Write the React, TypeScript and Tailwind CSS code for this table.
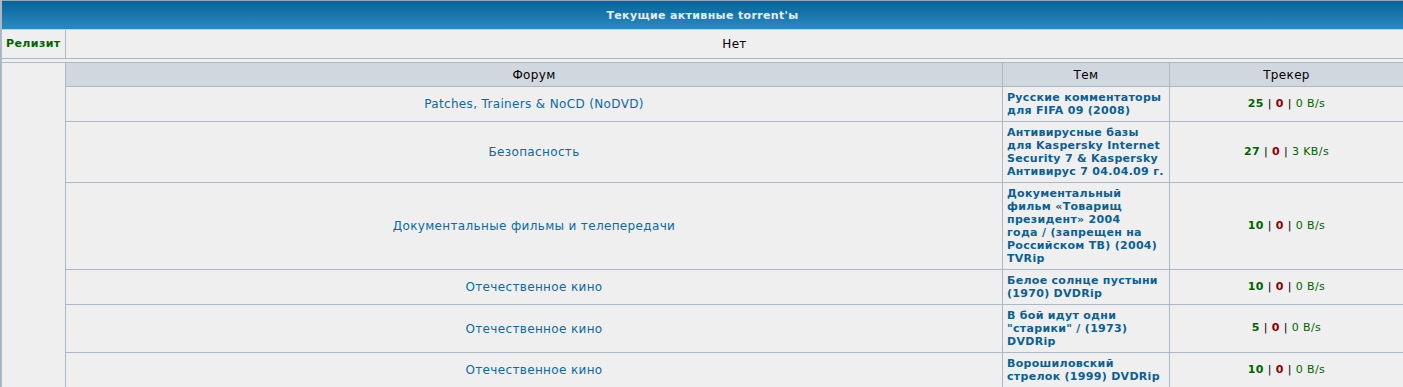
import React from "react";

type Row = { forum: string; topic: string[]; seed: number; leech: number; speed: string };

const rows: Row[] = [
  { forum: "Patches, Trainers & NoCD (NoDVD)", topic: ["Русские комментаторы", "для FIFA 09 (2008)"], seed: 25, leech: 0, speed: "0 B/s" },
  { forum: "Безопасность", topic: ["Антивирусные базы", "для Kaspersky Internet", "Security 7 & Kaspersky", "Антивирус 7 04.04.09 г."], seed: 27, leech: 0, speed: "3 KB/s" },
  { forum: "Документальные фильмы и телепередачи", topic: ["Документальный", "фильм «Товарищ", "президент» 2004", "года / (запрещен на", "Российском ТВ) (2004)", "TVRip"], seed: 10, leech: 0, speed: "0 B/s" },
  { forum: "Отечественное кино", topic: ["Белое солнце пустыни", "(1970) DVDRip"], seed: 10, leech: 0, speed: "0 B/s" },
  { forum: "Отечественное кино", topic: ["В бой идут одни", "\"старики\" / (1973)", "DVDRip"], seed: 5, leech: 0, speed: "0 B/s" },
  { forum: "Отечественное кино", topic: ["Ворошиловский", "стрелок (1999) DVDRip"], seed: 10, leech: 0, speed: "0 B/s" },
];

export default function App() {
  return (
    <div
      className="w-[1403px] h-[387px] overflow-hidden bg-[#efefef] text-[11px] text-black"
      style={{ fontFamily: "Verdana, 'DejaVu Sans', sans-serif" }}
    >
      <div className="border-l-2 border-[#abb8c6] min-h-full">
        {/* Title bar */}
        <div className="h-[30px] border-t border-t-[#93a7b6] border-b border-b-[#c3d0da] bg-gradient-to-b from-[#04649a] to-[#2a8ac0] flex items-center justify-center">
          <span className="font-bold text-[#e4eef6] leading-[13px] tracking-[0.35px]">Текущие активные torrent'ы</span>
        </div>
        {/* Релизит row */}
        <div className="h-[29px] flex border-b border-[#abb8c6]">
          <div className="w-[64px] border-r border-[#abb8c6] flex items-center pl-[4px] font-bold text-[#006400] tracking-[0.4px]">Релизит</div>
          <div className="flex-1 flex items-center justify-center text-[12px] tracking-[0.35px]">Нет</div>
        </div>
        {/* spacer */}
        <div className="h-[4px] border-b border-[#abb8c6]" />
        {/* body */}
        <div className="flex">
          <div className="w-[64px] shrink-0 border-r border-[#abb8c6]" />
          <div className="flex-1 grid grid-cols-[937px_167px_1fr]">
            <div className="h-[24px] bg-[#d1d7df] border-r border-b border-[#abb8c6] flex items-center justify-center text-[12px] tracking-[0.35px]">Форум</div>
            <div className="h-[24px] bg-[#d1d7df] border-r border-b border-[#abb8c6] flex items-center justify-center text-[12px] tracking-[0.35px]">Тем</div>
            <div className="h-[24px] bg-[#d1d7df] border-b border-[#abb8c6] flex items-center justify-center text-[12px] tracking-[0.35px]">Трекер</div>
            {rows.map((r, i) => (
              <React.Fragment key={i}>
                <div className="border-r border-b border-[#abb8c6] flex items-center justify-center text-[#0a6aa1] text-[12px] tracking-[0.35px]">
                  {r.forum}
                </div>
                <div className="border-r border-b border-[#abb8c6] py-[4px] pl-[4px] leading-[13px] font-bold text-[#0b5f93] whitespace-nowrap tracking-[0.3px] overflow-hidden">
                  {r.topic.map((t, j) => (
                    <div key={j}>{t}</div>
                  ))}
                </div>
                <div className="border-b border-[#abb8c6] flex items-center justify-center whitespace-pre tracking-[0.4px]">
                  <span className="font-bold text-[#006400]">{r.seed}</span>
                  <span> | </span>
                  <span className="font-bold text-[#8b0000]">{r.leech}</span>
                  <span> | </span>
                  <span className="text-[#006400]">{r.speed}</span>
                </div>
              </React.Fragment>
            ))}
          </div>
        </div>
      </div>
    </div>
  );
}
